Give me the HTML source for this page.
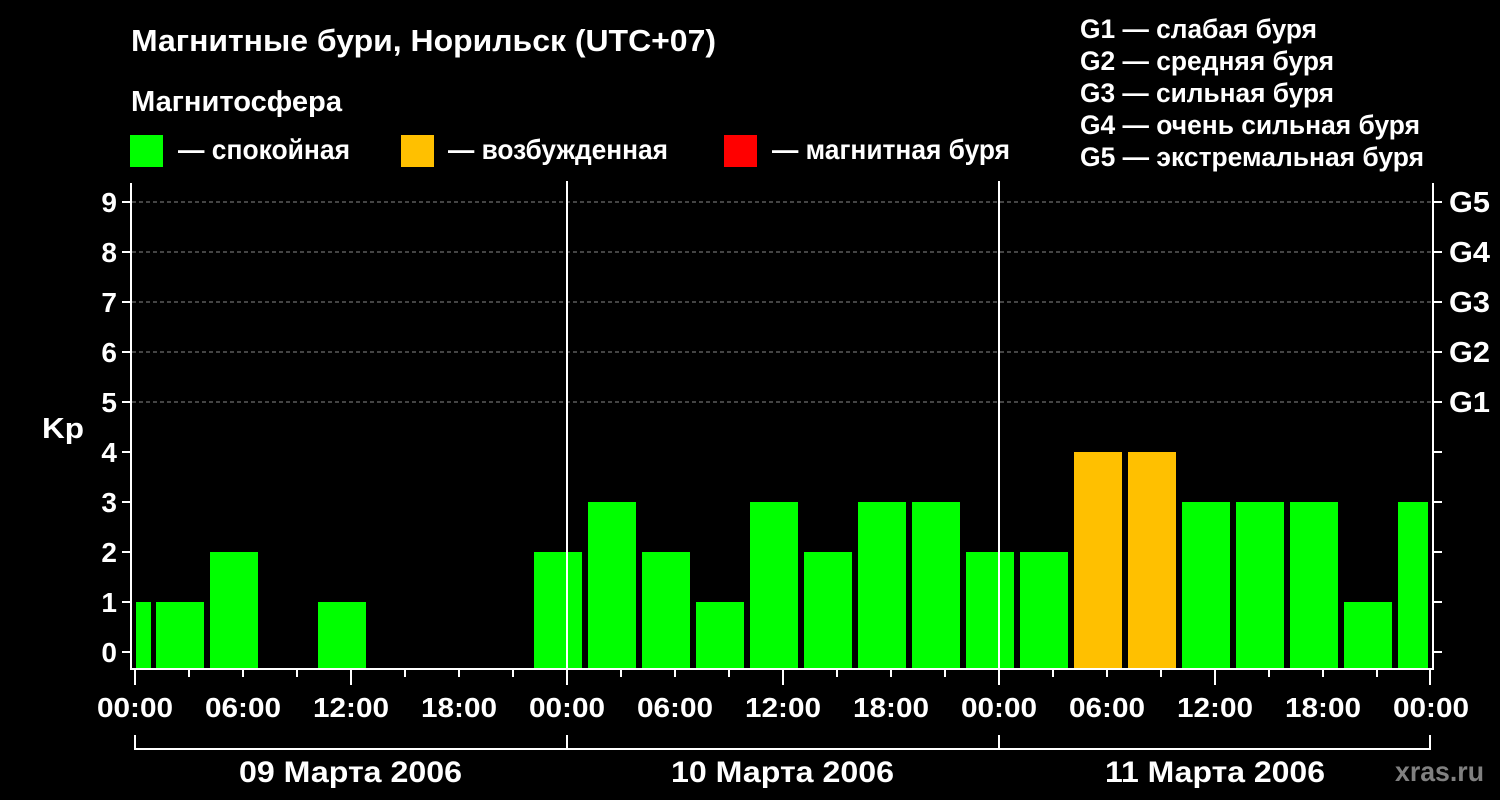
<!DOCTYPE html>
<html><head><meta charset="utf-8"><style>html,body{margin:0;background:#000;}svg{display:block}</style></head>
<body>
<svg width="1500" height="800" xmlns="http://www.w3.org/2000/svg" font-family="Liberation Sans, Arial, sans-serif" font-weight="bold" fill="#fff">
<rect width="1500" height="800" fill="#000"/>
<text x="131" y="51" font-size="31" textLength="585" lengthAdjust="spacingAndGlyphs">Магнитные бури, Норильск (UTC+07)</text>
<text x="131" y="111" font-size="29" textLength="211" lengthAdjust="spacingAndGlyphs">Магнитосфера</text>
<rect x="130" y="135" width="33" height="32" fill="#00ff00"/>
<text x="178" y="159" font-size="28" textLength="172" lengthAdjust="spacingAndGlyphs">— спокойная</text>
<rect x="401" y="135" width="33" height="32" fill="#ffc000"/>
<text x="448" y="159" font-size="28" textLength="220" lengthAdjust="spacingAndGlyphs">— возбужденная</text>
<rect x="724" y="135" width="33" height="32" fill="#ff0000"/>
<text x="772" y="159" font-size="28" textLength="238" lengthAdjust="spacingAndGlyphs">— магнитная буря</text>
<g font-size="27">
<text x="1080" y="38" textLength="237" lengthAdjust="spacingAndGlyphs">G1 — слабая буря</text>
<text x="1080" y="70" textLength="254" lengthAdjust="spacingAndGlyphs">G2 — средняя буря</text>
<text x="1080" y="102" textLength="254" lengthAdjust="spacingAndGlyphs">G3 — сильная буря</text>
<text x="1080" y="134" textLength="340" lengthAdjust="spacingAndGlyphs">G4 — очень сильная буря</text>
<text x="1080" y="166" textLength="344" lengthAdjust="spacingAndGlyphs">G5 — экстремальная буря</text>
</g>
<g stroke="#888" stroke-width="1" stroke-dasharray="4,3">
<line x1="132" y1="202" x2="1432" y2="202"/><line x1="132" y1="252" x2="1432" y2="252"/>
<line x1="132" y1="302" x2="1432" y2="302"/><line x1="132" y1="352" x2="1432" y2="352"/>
<line x1="132" y1="402" x2="1432" y2="402"/>
</g>
<g fill="#00ff00">
<rect x="136" y="602" width="15" height="66"/>
<rect x="156" y="602" width="48" height="66"/>
<rect x="210" y="552" width="48" height="116"/>
<rect x="318" y="602" width="48" height="66"/>
<rect x="534" y="552" width="48" height="116"/>
<rect x="588" y="502" width="48" height="166"/>
<rect x="642" y="552" width="48" height="116"/>
<rect x="696" y="602" width="48" height="66"/>
<rect x="750" y="502" width="48" height="166"/>
<rect x="804" y="552" width="48" height="116"/>
<rect x="858" y="502" width="48" height="166"/>
<rect x="912" y="502" width="48" height="166"/>
<rect x="966" y="552" width="48" height="116"/>
<rect x="1020" y="552" width="48" height="116"/>
<rect x="1074" y="452" width="48" height="216" fill="#ffc000"/>
<rect x="1128" y="452" width="48" height="216" fill="#ffc000"/>
<rect x="1182" y="502" width="48" height="166"/>
<rect x="1236" y="502" width="48" height="166"/>
<rect x="1290" y="502" width="48" height="166"/>
<rect x="1344" y="602" width="48" height="66"/>
<rect x="1398" y="502" width="30" height="166"/>
</g>
<g stroke="#fff" stroke-width="2" fill="none">
<polyline points="131,183 131,669 1433,669 1433,183"/>
<line x1="567" y1="181" x2="567" y2="669"/>
<line x1="999" y1="181" x2="999" y2="669"/>
</g>
<g stroke="#fff" stroke-width="2" fill="none">
<path d="M122 202H131M122 252H131M122 302H131M122 352H131M122 402H131M122 452H131M122 502H131M122 552H131M122 602H131M122 652H131"/>
<path d="M1433 202H1442M1433 252H1442M1433 302H1442M1433 352H1442M1433 402H1442M1433 452H1442M1433 502H1442M1433 552H1442M1433 602H1442M1433 652H1442"/>
<path d="M135 669V685M351 669V685M567 669V685M783 669V685M999 669V685M1215 669V685M1430 669V685"/>
<path d="M189 669V677M243 669V677M297 669V677M405 669V677M459 669V677M513 669V677M621 669V677M675 669V677M729 669V677M837 669V677M891 669V677M945 669V677M1053 669V677M1107 669V677M1161 669V677M1269 669V677M1323 669V677M1377 669V677"/>
<path d="M135 735V749H1430V735M567 735V749M999 735V749"/>
</g>
<g font-size="28" text-anchor="end">
<text x="117" y="212">9</text><text x="117" y="262">8</text><text x="117" y="312">7</text>
<text x="117" y="362">6</text><text x="117" y="412">5</text><text x="117" y="462">4</text>
<text x="117" y="512">3</text><text x="117" y="562">2</text><text x="117" y="612">1</text>
<text x="117" y="662">0</text>
</g>
<text x="42" y="438" font-size="29" textLength="42" lengthAdjust="spacingAndGlyphs">Kp</text>
<g font-size="29">
<text x="1449" y="212" textLength="41" lengthAdjust="spacingAndGlyphs">G5</text><text x="1449" y="262" textLength="41" lengthAdjust="spacingAndGlyphs">G4</text><text x="1449" y="312" textLength="41" lengthAdjust="spacingAndGlyphs">G3</text>
<text x="1449" y="362" textLength="41" lengthAdjust="spacingAndGlyphs">G2</text><text x="1449" y="412" textLength="41" lengthAdjust="spacingAndGlyphs">G1</text>
</g>
<g font-size="28">
<text x="97" y="717" textLength="76" lengthAdjust="spacingAndGlyphs">00:00</text><text x="205" y="717" textLength="76" lengthAdjust="spacingAndGlyphs">06:00</text><text x="313" y="717" textLength="76" lengthAdjust="spacingAndGlyphs">12:00</text><text x="421" y="717" textLength="76" lengthAdjust="spacingAndGlyphs">18:00</text>
<text x="529" y="717" textLength="76" lengthAdjust="spacingAndGlyphs">00:00</text><text x="637" y="717" textLength="76" lengthAdjust="spacingAndGlyphs">06:00</text><text x="745" y="717" textLength="76" lengthAdjust="spacingAndGlyphs">12:00</text><text x="853" y="717" textLength="76" lengthAdjust="spacingAndGlyphs">18:00</text>
<text x="961" y="717" textLength="76" lengthAdjust="spacingAndGlyphs">00:00</text><text x="1069" y="717" textLength="76" lengthAdjust="spacingAndGlyphs">06:00</text><text x="1177" y="717" textLength="76" lengthAdjust="spacingAndGlyphs">12:00</text><text x="1285" y="717" textLength="76" lengthAdjust="spacingAndGlyphs">18:00</text>
<text x="1393" y="717" textLength="76" lengthAdjust="spacingAndGlyphs">00:00</text>
</g>
<g font-size="30">
<text x="239" y="782" textLength="223" lengthAdjust="spacingAndGlyphs">09 Марта 2006</text>
<text x="671" y="782" textLength="223" lengthAdjust="spacingAndGlyphs">10 Марта 2006</text>
<text x="1105" y="782" textLength="220" lengthAdjust="spacingAndGlyphs">11 Марта 2006</text>
</g>
<text x="1395" y="781" font-size="28" fill="#808080" textLength="89" lengthAdjust="spacingAndGlyphs">xras.ru</text>
</svg>
</body></html>
